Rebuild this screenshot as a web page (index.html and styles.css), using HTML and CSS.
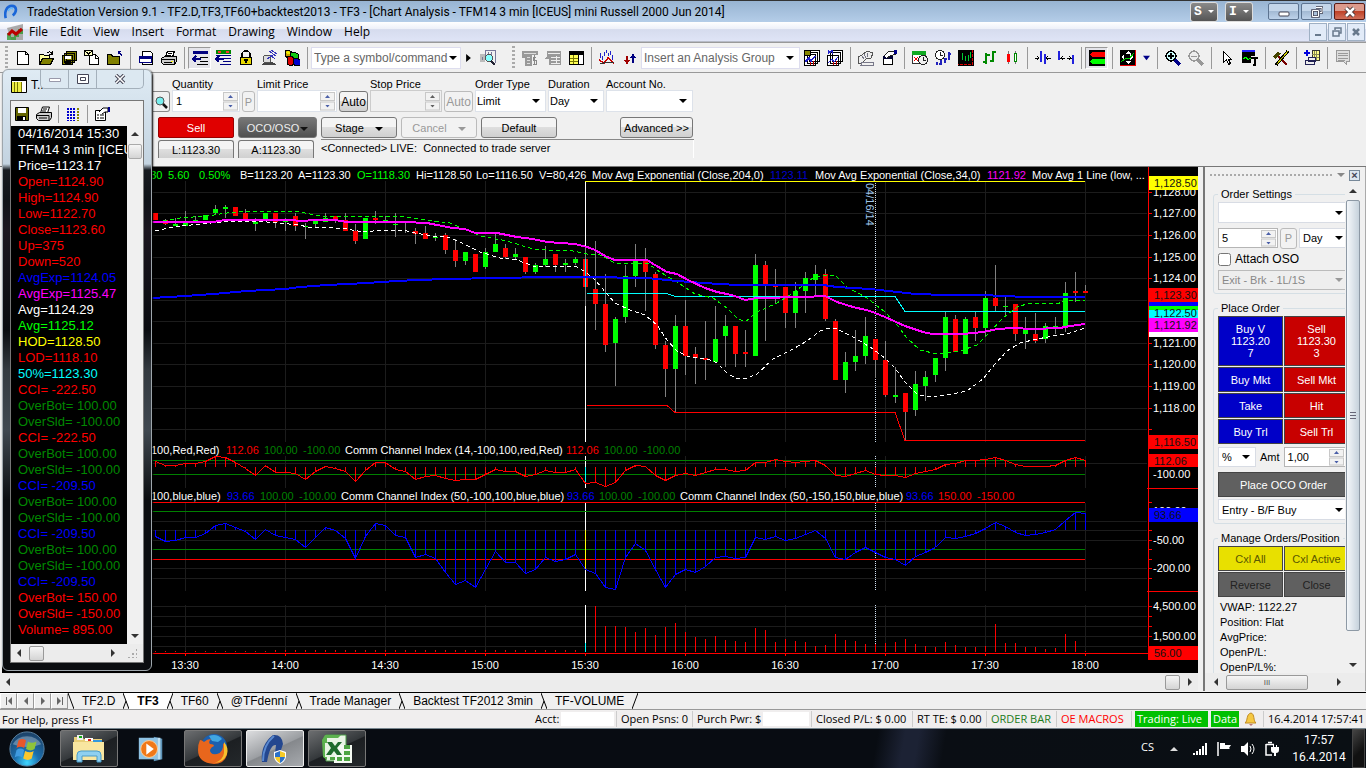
FILE: index.html
```html
<!DOCTYPE html>
<html lang="en">
  <head>
    <meta charset="UTF-8" />
    <meta name="viewport" content="width=device-width, initial-scale=1.0" />
    <title>TradeStation - Chart Analysis</title>
    <link rel="stylesheet" href="styles.css">
  </head>
  <body>
    <header class="titlebar">
      <svg class="app-logo" viewBox="0 0 16 16"><path d="M2 15C0 8 3 1 9 1s6 7 1 11" fill="none" stroke="#1a66d8" stroke-width="3"/><path d="M5 7c1-4 4-4 5-2" fill="none" stroke="#58b8ff" stroke-width="1.5"/></svg>
      <h1>TradeStation Version 9.1 - TF2.D,TF3,TF60+backtest2013 - TF3 - [Chart Analysis - TFM14 3 min [ICEUS] mini Russell 2000 Jun 2014]</h1>
      <button class="si-btn">S <span class="caret"></span></button>
      <button class="si-btn">I <span class="caret"></span></button>
      <div class="win-btns">
        <button aria-label="Minimize"><svg viewBox="0 0 12 12"><rect x="1" y="6" width="10" height="4" rx="1" fill="#fff" stroke="#445" /></svg></button>
        <button aria-label="Restore"><svg viewBox="0 0 12 12"><path d="M5 1.5h6v5H9M1.5 4.5h6v6h-6z" fill="none" stroke="#445" stroke-width="2.6"/><path d="M5 1.5h6v5H9M1.5 4.5h6v6h-6z" fill="none" stroke="#fff"/></svg></button>
        <button class="close" aria-label="Close"><svg viewBox="0 0 12 12"><path d="M2 2l8 8M10 2l-8 8" stroke="#433" stroke-width="4.5"/><path d="M2 2l8 8M10 2l-8 8" stroke="#fff" stroke-width="2.5"/></svg></button>
      </div>
    </header>

    <nav class="menubar">
      <svg class="icon" viewBox="0 0 16 16"><path d="M0 4L16 0v16H4z" fill="#aaa"/><path d="M0 9h4v4h3V9h4V5h5v5h-4v3h-3v3H0z" fill="#393" opacity=".8"/><path d="M1 11l4-4 4 3 6-5" stroke="#b00" stroke-width="3" fill="none"/></svg>
      <a href="#">File</a><a href="#">Edit</a><a href="#">View</a><a href="#">Insert</a><a href="#">Format</a><a href="#">Drawing</a><a href="#">Window</a><a href="#">Help</a>
      <div class="mdi-btns">
        <button aria-label="Minimize document"><svg viewBox="0 0 10 10"><path d="M2 8h6" stroke="#68798c" stroke-width="2"/></svg></button>
        <button aria-label="Restore document"><svg viewBox="0 0 10 10"><path d="M3 3V1h6v5H7M1 4h6v5H1z" fill="none" stroke="#68798c" stroke-width="1.5"/></svg></button>
        <button aria-label="Close document"><svg viewBox="0 0 10 10"><path d="M2 2l6 6M8 2l-6 6" stroke="#68798c" stroke-width="2.5"/></svg></button>
      </div>
    </nav>

    <div class="toolbar">
      <span class="grip"></span>
      <button aria-label="New"><svg class="icon" viewBox="0 0 16 16"><path d="M2.5 1.5h8l3 3v10h-11zM10.500 1.5v3h3" fill="#fff" stroke="#000"/></svg></button>
      <button aria-label="Open"><svg class="icon" viewBox="0 0 16 16"><path d="M1.5 14.5v-10h4l1 1h5v3" fill="#ffff9c" stroke="#000"/><path d="M1.5 14.5l3-6h11l-3 6z" fill="#808000" stroke="#000"/><path d="M9 3c2-2 4-1 5 1M14 1v3h-3" fill="none" stroke="#000"/></svg></button>
      <button aria-label="Save all"><svg class="icon" viewBox="0 0 16 16"><path d="M5.5 1.5h10v9h-10zM3.5 3.5h10v9h-10zM1.5 5.5h10v9h-10z" fill="#808000" stroke="#000"/><path d="M4 6h6v3H4z" fill="#fff"/><path d="M4 11h6v4H4z"/></svg></button>
      <button aria-label="Mail"><svg class="icon" viewBox="0 0 16 16"><path d="M5.5 4.5h6l3 3v7h-9z" fill="#fff" stroke="#000"/><path d="M.5.5h8v5h-8z" fill="#ffffc0" stroke="#000"/><path d="M1 1l3.5 3L8 1M11 5v3h3" fill="none" stroke="#000"/></svg></button>
      <button aria-label="Close folder"><svg class="icon" viewBox="0 0 16 16"><path d="M.5 14.5v-10h4l1 2h7v8z" fill="#808000" stroke="#000"/><path d="M15 6l-3-4M11 4V1h3" fill="none" stroke="#000080"/></svg></button>
      <span class="sep"></span>
      <button aria-label="Window"><svg class="icon" viewBox="0 0 16 16"><path d="M4.5 1.5h8l2 2v11h-10z" fill="#fff" stroke="#000"/><path d="M1.5 6.5h12v6h-12z" fill="#fff" stroke="#000080"/><path d="M1 6h13v3H1z" fill="#000080"/></svg></button>
      <button aria-label="Print"><svg class="icon" viewBox="0 0 16 16"><path d="M4.5 7l2-6h7l-2 6" fill="#fff" stroke="#000"/><path d="M.5 8.5l3-2h12v5l-2 3h-11l-2-2z" fill="#ccc" stroke="#000"/><path d="M1 9.5h12v5M7 3h4M6 5h4M3 12h8" fill="none" stroke="#000"/><path d="M10 11h2v1h-2z" fill="#ff0"/></svg></button>
      <span class="sep"></span>
      <button class="pressed" aria-label="Order bar"><svg class="icon" viewBox="0 0 16 16"><path d="M1 1h15v3H1z" fill="#000080"/><path d="M8 7h8M8 11h8M5 14h11" stroke="#000"/><path d="M9 9H1l3-3M1 9l3 3" fill="none" stroke="#000080" stroke-width="1.5"/></svg></button>
      <button aria-label="Tracking"><svg class="icon" viewBox="0 0 16 16"><path d="M1 0h15v4H1z" fill="#080"/><path d="M3 1h3v2H3zM11 1h3v2h-3z" fill="#f33"/><path d="M1 5h15M8 8h8M8 11h8M5 14h11" stroke="#000080"/><path d="M9 9H1l3-3M1 9l3 3" fill="none" stroke="#000080" stroke-width="1.5"/></svg></button>
      <button aria-label="Lock"><svg class="icon" viewBox="0 0 16 16"><path d="M4 8V4a4 3 0 0 1 8 0v4" fill="none" stroke="#000" stroke-width="1.5"/><path d="M2.5 7.5h11v7h-11z" fill="#e8d800" stroke="#000"/><path d="M8 9v4M6 10h4" stroke="#000" stroke-width="1.5"/></svg></button>
      <button aria-label="Data link"><svg class="icon" viewBox="0 0 16 16"><path d="M1 15l4-5 8 3 2 2z" fill="#444"/><circle cx="6" cy="9" r="4" fill="#ddd" stroke="#555"/><path d="M6 9l6-4M8 1l7 5M10 0l6 4M9 5l5 4" stroke="#33b" fill="none"/></svg></button>
      <button aria-label="Blocks"><svg class="icon" viewBox="0 0 16 16"><path d="M1 1l3-1 4 2v5l-4 1-3-2z" fill="#c8a000" stroke="#000"/><path d="M6 3l4-1 4 2v5l-4 1-4-2z" fill="#1c1" stroke="#000"/><path d="M3 7l4-1 3 2v6l-3 2-4-2z" fill="#d00" stroke="#000"/><path d="M9 9l4-1 3 2v5l-4 1-3-2z" fill="#00c" stroke="#000"/><path d="M1 2l3-1 3 2-3 1z" fill="#ee0"/></svg></button>
      <span class="sep"></span>
      <select class="combo symbol" aria-label="Symbol"><option>Type a symbol/command</option></select>
      <button class="narrow" aria-label="Go"><svg viewBox="0 0 6 10"><path d="M0 0v10l6-5z"/></svg></button>
      <button class="find" aria-label="Find symbol"><svg class="icon" viewBox="0 0 16 16"><path d="M0 4h5v8H0z" fill="#bbb"/><path d="M5 .5h10v12M2 7v3M5 1v6M8 2v3M11 2v3" fill="none" stroke="#779"/><circle cx="9" cy="8" r="3.5" fill="#8ff" stroke="#555"/><path d="M11 11l4 4" stroke="#223" stroke-width="2"/></svg></button>
      <span class="grip second"></span>
      <button aria-label="Quotes"><svg class="icon" viewBox="0 0 16 16"><path d="M0 1h16v4h-6v11H3V8H0z" fill="#999"/><path d="M2 3h12M5 7h3M5 10h3M5 13h3" stroke="#ddd"/><path d="M14 7h-3v3h3v4h-3M12.5 5v10" stroke="#888" fill="none"/></svg></button>
      <button aria-label="Matrix"><svg class="icon" viewBox="0 0 16 16"><path d="M2 1h14v14H4V9H0l2-3z" fill="#999"/><path d="M3 3h12M6 7h9M6 10h9M6 13h9M11 6v8" stroke="#eee"/></svg></button>
      <button aria-label="Table"><svg class="icon" viewBox="0 0 16 16"><path d="M1.5 1.5h14v13h-14z" fill="#fff" stroke="#000"/><path d="M1 1h15v4H1z"/><path d="M1.5 4.5h9v10h-9z" fill="#ff5" stroke="#000"/><path d="M5 5v9M2 8h8M2 11h8" stroke="#770"/></svg></button>
      <span class="sep"></span>
      <button aria-label="Strategy"><svg class="icon" viewBox="0 0 16 16"><path d="M1 3v5M3 6v4M5 2v4M7 0v3M9 3v3M11 1v4M13 5v5" stroke="#22c"/><path d="M0 10l5 3 4-5 6 5" stroke="#c00" fill="none" stroke-width="1.5"/><path d="M1 14l7-2 7 1" stroke="#333" fill="none"/></svg></button>
      <button aria-label="Buy and sell arrows"><svg class="icon" viewBox="0 0 16 16"><path d="M5 6v7M3 10l2 3 2-3" stroke="#a00000" stroke-width="1.5" fill="none"/><path d="M11 13V5M9 8l2-3 2 3" stroke="#000080" stroke-width="1.5" fill="none"/></svg></button>
      <select class="combo analysis" aria-label="Analysis group"><option>Insert an Analysis Group</option></select>
      <button aria-label="Save group"><svg class="icon" viewBox="0 0 16 16"><path d="M5.5.5h10v11h-10zM3.5 2.5h10v11h-10zM.5 4.5h11v11H.5z" fill="#fff" stroke="#000"/><path d="M.5.5h6v5h-6z" fill="#880" stroke="#000"/><path d="M1 12l4-4 2 3 4-5" stroke="#22c" fill="none" stroke-width="1.5"/><path d="M6 15v-3M9 11v4" stroke="#c00"/></svg></button>
      <button aria-label="Manage groups"><svg class="icon" viewBox="0 0 16 16"><path d="M5.5.5h10v11h-10zM3.5 2.5h10v11h-10zM.5 5.5h11v10H.5z" fill="#fff" stroke="#000"/><path d="M1 4V0l2 3 2-3v4M1 13l4-4 2 3 4-5" stroke="#22c" fill="none"/><path d="M6 15v-3M9 11v4" stroke="#c00"/></svg></button>
      <span class="sep"></span>
      <button aria-label="Format analysis"><svg class="icon" viewBox="0 0 16 16"><path d="M0 7l4-2 5-4 6 2-2 5-5 1-4 4H0z" fill="#eee" stroke="#555"/><path d="M4 6l2 3M6 4l2 4M9 3l1 4M4 12h11v3H3z" fill="none" stroke="#778"/></svg></button>
      <button aria-label="Format window"><svg class="icon" viewBox="0 0 16 16"><path d="M2.5 6.5h9v8h-9z" fill="#fff" stroke="#000"/><path d="M2 6h10v3H2z" fill="#003"/><path d="M3 6l4-4 7-1 1 3-6 2-3 2" fill="#fff" stroke="#222"/><path d="M13 0h3v4h-3z" fill="#008"/></svg></button>
      <span class="sep"></span>
      <button aria-label="Calendar"><svg class="icon" viewBox="0 0 16 16"><path d="M.5 2.5h13v11H.5z" fill="#fff" stroke="#333"/><path d="M0 1h14v4H0z" fill="#1a2"/><path d="M2 7l4 4M6 7l-4 4" stroke="#e00"/><circle cx="11" cy="10" r="4.5" fill="#eee" stroke="#222"/><path d="M11 7v3h3" stroke="#222" fill="none"/></svg></button>
      <button aria-label="Interval"><svg class="icon" viewBox="0 0 16 16"><circle cx="5" cy="5" r="4.5" fill="#fff" stroke="#222"/><path d="M5 2v3l3 1" stroke="#222" fill="none"/><path d="M2 12v3M6 10v5M10 8v5M14 2v8M4 14h2M10 9h2M14 4h2" stroke="#22b" stroke-width="1.5"/></svg></button>
      <button aria-label="Chart style"><svg class="icon" viewBox="0 0 16 16"><path d="M0 0h16v16H0z"/><path d="M4 3v7M7 6v5M10 5v6M12 2v6" stroke="#0c3"/><path d="M14.5 0v14.5H0" fill="none" stroke="#d00" stroke-dasharray="3 1"/></svg></button>
      <button aria-label="OHLC"><svg class="icon" viewBox="0 0 16 16"><path d="M5 3v11M2 12h3M5 5h4M12 1v11M9 11h3M12 2h3" stroke="#080" stroke-width="2"/></svg></button>
      <button aria-label="Candles"><svg class="icon" viewBox="0 0 16 16"><path d="M4.5 1v13M11.500 1v13" stroke="#777"/><path d="M3 4h3v8H3z" fill="#f00"/><path d="M10.5 3.5h2v8h-2z" fill="#fff" stroke="#080"/></svg></button>
      <span class="sep"></span>
      <button aria-label="Narrow bars"><svg class="icon" viewBox="0 0 16 16"><path d="M5.5 1v11M9.500 4v10" stroke="#22d" stroke-width="2"/><path d="M0 8h4M2 6l2 2-2 2M16 8h-5M13 6l-2 2 2 2" stroke="#000" fill="none"/></svg></button>
      <button aria-label="Widen bars"><svg class="icon" viewBox="0 0 16 16"><path d="M1 1v9M15 5v9" stroke="#22d" stroke-width="2"/><path d="M2 8h5M5 6L3 8l2 2M9 8h5M11 6l2 2-2 2" stroke="#000" fill="none"/></svg></button>
      <span class="sep"></span>
      <button class="pressed" aria-label="Chart trading"><svg class="icon" viewBox="0 0 16 16"><path d="M0 0h16v16H0z"/><path d="M1 5l2-3h13v5H3z" fill="#f00"/><path d="M1 12l2-3h13v5H3z" fill="#0f0"/></svg></button>
      <span class="sep"></span>
      <button aria-label="Crosshair"><svg class="icon" viewBox="0 0 16 16"><path d="M0 0h16v16H0z"/><path d="M8 1l3 3H5zM8 14l3-3H5zM1 7l3-3v6zM13 7l-3-3v6z" fill="#fff"/><path d="M1 12l5-4 3 1 5-6" stroke="#0c0" fill="none"/><path d="M15 0v15H0" stroke="#e00" fill="none"/></svg></button>
      <button class="narrow" aria-label="More pointers"><svg viewBox="0 0 8 5"><path d="M0 0h8L4 5z" fill="#008"/></svg></button>
      <span class="sep"></span>
      <button aria-label="Zoom in"><svg class="icon" viewBox="0 0 16 16"><circle cx="6" cy="6" r="5" fill="#cff" stroke="#000" stroke-width="1.5"/><path d="M3 6h6M6 3v6" stroke="#000" stroke-width="1.5"/><path d="M10 10l5 5" stroke="#008" stroke-width="3"/></svg></button>
      <button aria-label="Zoom out"><svg class="icon" viewBox="0 0 16 16"><circle cx="6" cy="6" r="5" fill="#eee" stroke="#999" stroke-width="1.5"/><path d="M3 6h6" stroke="#999"/><path d="M10 10l5 5" stroke="#999" stroke-width="3"/></svg></button>
      <span class="sep"></span>
      <button aria-label="Pointer"><svg class="icon" viewBox="0 0 16 16"><path d="M4.5 1.5v11l3-3 2 5 2-1-2-4h3z" fill="#fff" stroke="#000"/></svg></button>
      <button aria-label="Text tool"><svg class="icon" viewBox="0 0 16 16"><path d="M0 0h13v13H0z"/><path d="M0 0h13v2H0z" fill="#22f"/><path d="M1 9l3-2 2 3 2-2h3" stroke="#0f0" fill="none"/><path d="M9 6h7v9H9z" fill="#f0f0f0"/><path d="M9 8h7M12.5 8v7M11 15h3" stroke="#000" stroke-width="2"/></svg></button>
      <span class="sep"></span>
      <button aria-label="Tools"><svg class="icon" viewBox="0 0 16 16"><path d="M4 5l10 10" stroke="#700" stroke-width="2"/><path d="M15 1L3 15" stroke="#000" stroke-width="3"/><path d="M15 1L4 14" stroke="#cc0"/><path d="M0 7l4-5 4 1-5 6z" fill="#440"/></svg></button>
      <span class="sep"></span>
      <button aria-label="Add order"><svg class="icon" viewBox="0 0 16 16"><path d="M8 .5h7v10H8z" fill="#ff8" stroke="#333"/><path d="M10 1v9M12.5 1v9M8 4h7M8 7h7" stroke="#885"/><path d="M0 3h6M3 0v6" stroke="#00d" stroke-width="2"/><path d="M4.5 7.5h7v4h-7zM1.5 10.5h9v4h-9z" fill="#eee" stroke="#225"/></svg></button>
      <span class="sep"></span>
      <button aria-label="Notes"><svg class="icon" viewBox="0 0 16 16"><path d="M1.5.5h13v11h-3v3l-3-3h-7z" fill="#ddd" stroke="#999"/><path d="M3 3h10M3 5.5h10M3 8h10M3 10h7" stroke="#999"/></svg></button>
    </div>

    <form class="orderbar">
      <div class="order-fields">
        <button type="button" class="lookup" aria-label="Look up symbol"><svg class="icon" viewBox="0 0 16 16"><circle cx="7" cy="7" r="4" fill="#7ee" stroke="#555"/><path d="M10 10l4 4" stroke="#111" stroke-width="2.5"/></svg></button>
        <div class="field qty"><label for="qty">Quantity</label><div class="spin"><input id="qty" value="1" /><span class="steps"><button type="button" aria-label="Up"></button><button type="button" aria-label="Down"></button></span></div></div>
        <button type="button" class="btn small" disabled>P</button>
        <div class="field limit"><label for="limit">Limit Price</label><div class="spin"><input id="limit" /><span class="steps"><button type="button" aria-label="Up"></button><button type="button" aria-label="Down"></button></span></div></div>
        <button type="button" class="btn auto">Auto</button>
        <div class="field stop"><label for="stop">Stop Price</label><div class="spin off"><input id="stop" disabled /><span class="steps"><button type="button" aria-label="Up" disabled></button><button type="button" aria-label="Down" disabled></button></span></div></div>
        <button type="button" class="btn auto" disabled>Auto</button>
        <div class="field type"><label for="type">Order Type</label><select id="type"><option>Limit</option></select></div>
        <div class="field dur"><label for="dur">Duration</label><select id="dur"><option>Day</option></select></div>
        <div class="field acct"><label for="acct">Account No.</label><select id="acct"><option></option></select></div>
      </div>
      <div class="order-actions">
        <div class="quote"><button type="button" class="btn sell">Sell</button><button type="button" class="btn price">L:1123.30</button></div>
        <div class="quote"><button type="button" class="btn oco">OCO/OSO<span class="caret"></span></button><button type="button" class="btn price">A:1123.30</button></div>
        <div class="rest">
          <div class="rest-btns">
            <button type="button" class="btn wide">Stage <span class="caret gap"></span></button>
            <button type="button" class="btn wide" disabled>Cancel <span class="caret gap"></span></button>
            <button type="button" class="btn wide">Default</button>
            <button type="button" class="btn adv">Advanced &gt;&gt;</button>
          </div>
          <p class="conn">&lt;Connected&gt; LIVE:&nbsp; Connected to trade server</p>
        </div>
      </div>
    </form>

    <main class="workspace">
      <section class="chart-pane">
        <svg id="chart" viewBox="0 167 1198 506" role="img" aria-label="TFM14 3 min chart"></svg>
        <div class="hscroll"><i class="arr left"></i><span class="track"></span><span class="thumb"></span><i class="arr right"></i></div>
      </section>

      <aside class="side">
        <div class="side-top"><span class="dots"></span><i class="arr down grey"></i><button class="side-close" aria-label="Close panel">×</button></div>
        <div class="side-body">
          <div class="side-view">
            <div class="side-inner">
              <fieldset class="group">
                <legend>Order Settings</legend>
                <select aria-label="Account"><option></option></select>
                <div class="row">
                  <div class="spin s-qty"><input aria-label="Size" value="5" /><span class="steps"><button aria-label="Up"></button><button aria-label="Down"></button></span></div>
                  <button class="btn s-p" disabled>P</button>
                  <select class="s-day" aria-label="Duration"><option>Day</option></select>
                </div>
                <label class="check"><input type="checkbox" /> Attach OSO</label>
                <select class="s-exit" aria-label="Exit" disabled><option>Exit - Brk - 1L/1S</option></select>
              </fieldset>
              <fieldset class="group">
                <legend>Place Order</legend>
                <div class="pads">
                  <button class="buy tall">Buy V<br>1123.20<br>7</button><button class="ask tall">Sell<br>1123.30<br>3</button>
                  <button class="buy">Buy Mkt</button><button class="ask">Sell Mkt</button>
                  <button class="buy">Take</button><button class="ask">Hit</button>
                  <button class="buy">Buy Trl</button><button class="ask">Sell Trl</button>
                </div>
                <div class="row amt">
                  <select class="s-pct" aria-label="Unit"><option>%</option></select>
                  <label for="amt">Amt</label>
                  <div class="spin s-amt"><input id="amt" value="1,00" /><span class="steps"><button aria-label="Up"></button><button aria-label="Down"></button></span></div>
                </div>
                <button class="grey-pad">Place OCO Order</button>
                <select aria-label="Entry"><option>Entry - B/F Buy</option></select>
              </fieldset>
              <fieldset class="group">
                <legend>Manage Orders/Position</legend>
                <div class="pads">
                  <button class="cxl">Cxl All</button><button class="cxl">Cxl Active</button>
                  <button class="dim">Reverse</button><button class="dim">Close</button>
                </div>
                <ul class="stats">
                  <li>VWAP: 1122.27</li><li>Position: Flat</li><li>AvgPrice:</li><li>OpenP/L:</li><li>OpenP/L%:</li>
                </ul>
              </fieldset>
            </div>
          </div>
          <div class="vscroll"><i class="arr up"></i><span class="vthumb"></span><i class="arr down"></i></div>
        </div>
        <div class="hscroll"><i class="arr left"></i><span class="thumb long">III</span><span class="track"></span><i class="arr right"></i></div>
      </aside>
    </main>

    <nav class="tabs">
      <button class="nav" aria-label="First"><svg viewBox="0 0 8 8"><path d="M1 0h1v8H1zM7 0v8L3 4z"/></svg></button>
      <button class="nav" aria-label="Previous"><svg viewBox="0 0 8 8"><path d="M6 0v8L2 4z"/></svg></button>
      <button class="nav" aria-label="Next"><svg viewBox="0 0 8 8"><path d="M2 0v8l4-4z"/></svg></button>
      <button class="nav" aria-label="Last"><svg viewBox="0 0 8 8"><path d="M6 0h1v8H6zM1 0v8l4-4z"/></svg></button>
      <svg class="slash" viewBox="0 0 6 17"><path d="M0 0l6 16"/></svg>
      <a href="#">TF2.D</a>
      <svg class="slash" viewBox="0 0 6 17"><path class="white" d="M0 0h6v17z"/><path d="M0 0l6 16M0 16l3-8"/></svg>
      <a href="#" class="active">TF3</a>
      <svg class="slash" viewBox="0 0 6 17"><path class="white" d="M0 0h6l-6 17z"/><path d="M6 0L0 16M6 16L3 8"/></svg>
      <a href="#">TF60</a>
      <svg class="slash" viewBox="0 0 6 17"><path d="M0 0l6 16M0 16l3-8"/></svg>
      <a href="#">@TFdenní</a>
      <svg class="slash" viewBox="0 0 6 17"><path d="M0 0l6 16M0 16l3-8"/></svg>
      <a href="#">Trade Manager</a>
      <svg class="slash" viewBox="0 0 6 17"><path d="M0 0l6 16M0 16l3-8"/></svg>
      <a href="#">Backtest TF2012 3min</a>
      <svg class="slash" viewBox="0 0 6 17"><path d="M0 0l6 16M0 16l3-8"/></svg>
      <a href="#">TF-VOLUME</a>
      <svg class="slash" viewBox="0 0 6 17"><path d="M6 0L0 16"/></svg>
    </nav>

    <footer class="status">
      <span class="help">For Help, press F1</span>
      <span class="cell c-acct">Acct: <i class="blank"></i></span>
      <span class="cell c-psn">Open Psns: 0</span>
      <span class="cell c-pwr">Purch Pwr: $<i class="blank"></i></span>
      <span class="cell c-pl">Closed P/L: $ 0.00</span>
      <span class="cell c-rt">RT TE: $ 0.00</span>
      <span class="cell c-ob">ORDER BAR</span>
      <span class="cell c-oe">OE MACROS</span>
      <span class="live c-live">Trading: Live</span>
      <span class="live c-data">Data</span>
      <svg class="bell" viewBox="0 0 14 14"><path d="M1 11c3-2 1-9 6-10 4 1 2 8 5 10z" fill="#f5c842" stroke="#c08a20"/><path d="M5 12h4l-2 2z" fill="#b77"/></svg>
      <span class="cell c-date">16.4.2014 17:57:41</span>
    </footer>

    <div class="taskbar">
      <button class="start" aria-label="Start"><svg viewBox="0 0 40 40">
        <defs><radialGradient id="orb" cx="50%" cy="90%" r="90%"><stop offset="0" stop-color="#3fd6ff"/><stop offset=".4" stop-color="#1b6fae"/><stop offset="1" stop-color="#1c3f63"/></radialGradient></defs>
        <circle cx="20" cy="20" r="18" fill="url(#orb)" stroke="#5c86a8"/>
        <path d="M5 15a16 13 0 0 1 30 0q-15 6-30 0z" fill="#fff" opacity=".3"/>
        <path d="M11 11q4-3 8 0l-2 8q-4-3-8 0z" fill="#e8572a"/><path d="M21 12q4 3 9 0l-2 8q-4 3-9 0z" fill="#8fc43a"/><path d="M9 21q4-3 8 0l-2 8q-4-3-8 0z" fill="#3f9be0"/><path d="M18 22q5 3 9 0l-2 8q-4 3-9 0z" fill="#fbc72c"/></svg></button>
      <button class="task" aria-label="Explorer"><svg viewBox="0 0 34 32"><path d="M2 4h8l2 2h18v20H2z" fill="#e9cf78"/><path d="M5 2h6v5H5z" fill="#eee"/><path d="M7 3h3v2H7z" fill="#1a1"/><path d="M13 5h8v3h-8z" fill="#fff"/><path d="M16 6h3v2h-3z" fill="#d22"/><path d="M21 7h9v3h-9z" fill="#39d"/><path d="M1 9h31v18H1z" fill="#f8e6a0"/><path d="M5 29V22q0-4 4-4h16q4 0 4 4v7h-4v-6H10v6z" fill="#8fd0f0" stroke="#4a9cc8"/></svg></button>
      <button class="task plain" aria-label="Media Player"><svg viewBox="0 0 34 32"><path d="M20 3l9 2v22l-9 2z" fill="#5d93b8"/><path d="M4 4h20v23H4z" fill="#8fc3e4"/><path d="M24 4h3v23h-3z" fill="#bfe0f2"/><circle cx="15" cy="16" r="9" fill="#f07818" stroke="#fbd2a0"/><path d="M12 10v12l8-6z" fill="#fff"/></svg></button>
      <button class="task" aria-label="Firefox"><svg viewBox="0 0 34 32"><circle cx="18" cy="14" r="13" fill="#1c5fae"/><path d="M13 3q8-3 13 3l-4 3-6-1z" fill="#41a6e0"/><path d="M4 7q2 0 4 2 3-3 7-3-3 3-1 5 4 0 4 2-3 1-4 4 0 5 7 4 7-2 6-11 5 6 4 12-3 9-13 9Q2 30 2 17q0-6 2-10z" fill="#e8661c"/><path d="M28 9q5 6 3 12-3 8-12 9 8-3 9-10z" fill="#f8c22e"/></svg></button>
      <button class="task current" aria-label="TradeStation"><svg viewBox="0 0 34 32"><path d="M4 29Q2 12 15 2q9-1 10 9l-3 9h-5l1-8q-6-1-9 17z" fill="#24478f"/><path d="M5 28Q5 12 16 3" fill="none" stroke="#5b8ad0" stroke-width="2"/><path d="M16 19l6-2 6 2v5q-1 5-6 7-5-2-6-7z" fill="#fff"/><path d="M17 20l5-2v6h-5zM22 24h5q-1 4-5 6z" fill="#2c72c8"/><path d="M22 18l5 2v4h-5zM17 24h5v6q-4-2-5-6z" fill="#f5ca28"/></svg></button>
      <button class="task" aria-label="Excel"><svg viewBox="0 0 34 32"><path d="M6 2h20v26H6z" fill="#e8f4e4" stroke="#4b9a48"/><path d="M2 7l3-5h16l-3 3H7v22l-4-3z" fill="#5db24f"/><path d="M5 10h17v14H5z" fill="#e8f4e4"/><path d="M19 12h13v18H14v-6" fill="#f4faf2"/><path d="M24 12h6v4h-6zM24 18h6v4h-6zM24 24h6v4h-6zM17 24h5v4h-5zM10 24h5v3h-5z" fill="#4ea543"/><path d="M7 9h5l3 4 3-4h4l-5 6 5 7h-5l-3-4-3 4H6l5-7z" fill="#1e6b2c"/></svg></button>
      <div class="tray">
        <span class="lang">CS</span>
        <i class="arr up"></i>
        <svg viewBox="0 0 16 16"><path d="M1 12h2v2H1zM4 10h2v4H4zM7 8h2v6H7zM10 5h2v9h-2zM13 2h2v12h-2z" fill="#fff"/></svg>
        <svg viewBox="0 0 16 16"><path d="M2 1v14" stroke="#fff" stroke-width="1.5"/><path d="M4 2h5v2h6l-2 3 1 1H9V8H4z" fill="#fff"/></svg>
        <svg viewBox="0 0 16 16"><path d="M1 5h3l4-4v14l-4-4H1z" fill="#fff"/><path d="M10 5q2 3 0 6M12 3q4 5 0 10" fill="none" stroke="#fff"/></svg>
        <svg viewBox="0 0 16 16"><path d="M2 3.500h8M2 3v11h6M4 1.500h4" fill="none" stroke="#fff" stroke-width="1.5"/><path d="M7 6h8v3q0 3-3 3h-2q-3 0-3-3zM10 12h2v3h-2zM9 4h1v2H9zM12 4h1v2h-1z" fill="#fff"/></svg>
        <time class="clock">17:57<br>16.4.2014</time>
        <button class="peek" aria-label="Show desktop"></button>
      </div>
    </div>

    <section class="data-window">
      <div class="dw-title">
        <svg class="icon" viewBox="0 0 16 16"><path d="M.5.5h15v15H.5z" fill="#fff" stroke="#000"/><path d="M0 0h16v4H0z"/><path d="M1 5h9v10H1z" fill="#ee4"/><path d="M3.5 5v10M6.5 5v10M10.5 5v10" stroke="#770"/></svg>
        <span>T...</span>
        <div class="dw-btns">
          <button aria-label="Minimize"><svg viewBox="0 0 12 10"><path d="M.5 4.5h11v3H.5z" fill="#fff" stroke="#99a"/></svg></button>
          <button aria-label="Maximize"><svg viewBox="0 0 12 10"><path d="M.5.5h11v9H.5zM3.5 3.5h5v3h-5z" fill="#fff" stroke="#445"/></svg></button>
          <button aria-label="Close"><svg viewBox="0 0 12 10"><path d="M2 1l8 8M10 1L2 9" stroke="#445" stroke-width="3.5"/><path d="M2 1l8 8M10 1L2 9" stroke="#fff" stroke-width="1.5"/></svg></button>
        </div>
      </div>
      <div class="dw-inner">
        <div class="dw-tools">
          <button aria-label="Save"><svg class="icon" viewBox="0 0 16 16"><path d="M1.5 1.5h13v13h-13z" fill="#660" stroke="#000"/><path d="M4 2h8v5H4z" fill="#fff"/><path d="M3 10h9v5H3z"/><path d="M9 11h2v3H9z" fill="#fff"/></svg></button>
          <button aria-label="Print"><svg class="icon" viewBox="0 0 16 16"><path d="M4.5 7l2-6h7l-2 6" fill="#fff" stroke="#000"/><path d="M.5 8.5l3-2h12v5l-2 3h-11l-2-2z" fill="#ccc" stroke="#000"/><path d="M1 9.5h12v5M7 3h4M6 5h4M3 12h8" fill="none" stroke="#000"/></svg></button>
          <span class="sep"></span>
          <button aria-label="Grid"><svg class="icon" viewBox="0 0 16 16"><path d="M3 2v13M6 2v13M9 2v13" stroke="#00c" stroke-width="2" stroke-dasharray="2 1"/><path d="M13 2v13" stroke="#880" stroke-width="2" stroke-dasharray="2 1"/></svg></button>
          <span class="sep"></span>
          <button aria-label="Properties"><svg class="icon" viewBox="0 0 16 16"><path d="M1.5 4.5h10v10h-10z" fill="#fff" stroke="#000"/><path d="M3 9h2M3 12h2M6 9h4M6 12h4" stroke="#000"/><path d="M5 6l4-4h5v4h-3l-3 2" fill="#fff" stroke="#000"/><path d="M14 1h2v5h-2z" fill="#008"/></svg></button>
        </div>
        <div class="dw-main">
          <ul class="dw-list">
            <li>04/16/2014 15:30</li><li>TFM14 3 min [ICEUS]</li><li>Price=1123.17</li>
            <li class="red">Open=1124.90</li><li class="red">High=1124.90</li><li class="red">Low=1122.70</li><li class="red">Close=1123.60</li><li class="red">Up=375</li><li class="red">Down=520</li>
            <li class="blue">AvgExp=1124.05</li><li class="magenta">AvgExp=1125.47</li><li>Avg=1124.29</li><li class="lime">Avg=1125.12</li><li class="yellow">HOD=1128.50</li><li class="red">LOD=1118.10</li><li class="cyan">50%=1123.30</li>
            <li class="red">CCI= -222.50</li><li class="green">OverBot= 100.00</li><li class="green">OverSld= -100.00</li>
            <li class="red">CCI= -222.50</li><li class="green">OverBot= 100.00</li><li class="green">OverSld= -100.00</li>
            <li class="blue">CCI= -209.50</li><li class="green">OverBot= 100.00</li><li class="green">OverSld= -100.00</li>
            <li class="blue">CCI= -209.50</li><li class="green">OverBot= 100.00</li><li class="green">OverSld= -100.00</li>
            <li class="blue">CCI= -209.50</li><li class="red">OverBot= 150.00</li><li class="red">OverSld= -150.00</li><li class="red">Volume= 895.00</li>
          </ul>
          <div class="vscroll"><i class="arr up"></i><span class="vthumb short"></span><i class="arr down"></i></div>
        </div>
        <div class="hscroll"><i class="arr left"></i><span class="thumb"></span><span class="track"></span><i class="arr right"></i><span class="size-grip"></span></div>
      </div>
    </section>

    <script src="chart.js"></script>
  </body>
</html>
```
FILE: styles.css
```css
* {
  box-sizing: border-box;
}

body {
  display: flex;
  flex-direction: column;
  position: relative;
  min-height: 100vh;
  margin: 0;
  overflow: hidden;
  background-color: #f0f0f0;
  color: #000;
  font-family: "Liberation Sans", Arial, sans-serif;
  font-size: 11px;
}

button,
input,
select {
  margin: 0;
  padding: 0;
  border: none;
  border-radius: 0;
  background: none;
  color: inherit;
  font: inherit;
}

a {
  color: inherit;
  text-decoration: none;
}

ul,
p {
  margin: 0;
  padding: 0;
  list-style: none;
}

.icon {
  display: block;
  flex: none;
  width: 16px;
  height: 16px;
}

/* title bar */
.titlebar {
  display: flex;
  align-items: center;
  height: 22px;
  padding: 0 1px 0 4px;
  border-top: 1px solid #333;
  background: linear-gradient(#98b4d2, #b4cde8);
  font-family: Roboto, "Open Sans", sans-serif;
}

.app-logo {
  width: 14px;
  height: 16px;
}

.titlebar h1 {
  flex: 1;
  margin: 0 0 0 9px;
  font-size: 12px;
  font-weight: normal;
  line-height: 20px;
  white-space: nowrap;
}

.si-btn {
  display: flex;
  justify-content: space-around;
  align-items: center;
  width: 28px;
  height: 20px;
  margin-right: 7px;
  border: 1px solid #ddd;
  border-radius: 3px;
  background: linear-gradient(#8a8a8a, #555);
  color: #fff;
  font: bold 13px "Liberation Mono", monospace;
}

.caret {
  display: inline-block;
  border: 4px solid transparent;
  border-top-color: currentColor;
  border-bottom: none;
  vertical-align: middle;
}

.caret.gap {
  margin-left: 8px;
}

.si-btn .caret {
  border-width: 3px 3px 0;
}

.win-btns {
  display: flex;
  gap: 2px;
  margin-left: 8px;
}

.win-btns button {
  width: 31px;
  height: 17px;
  border: 1px solid #5c7390;
  border-radius: 2px;
  background: linear-gradient(#c4d6ea 45%, #a3bad4 50%, #bdd2ea);
}

.win-btns svg {
  display: block;
  width: 12px;
  height: 12px;
  margin: auto;
}

.win-btns .close {
  border-color: #5a1a14;
  background: linear-gradient(#dc9a8c 45%, #bf4228 50%, #d0705a);
}

/* menu */
.menubar {
  display: flex;
  align-items: center;
  height: 20px;
  padding-left: 7px;
  border-bottom: 1px solid #b8bcc8;
  background: linear-gradient(#fff, #eef1f9 35%, #d6dcee 40%, #dfe4f6);
  font-family: "Open Sans", "Noto Sans", sans-serif;
  font-size: 12px;
}

.menubar a {
  padding: 0 6px;
}

.mdi-btns {
  display: flex;
  gap: 1px;
  margin-left: auto;
  padding-right: 1px;
}

.mdi-btns button {
  width: 18px;
  height: 18px;
  border: 1px solid #9fb0c4;
  background-color: #e2ebf8;
}

.mdi-btns svg {
  display: block;
  width: 10px;
  height: 10px;
  margin: auto;
}

/* toolbar */
.toolbar {
  display: flex;
  align-items: center;
  height: 31px;
  padding-left: 5px;
  border-top: 1px solid #999;
  border-bottom: 1px solid #999;
}

.toolbar button {
  display: flex;
  flex: none;
  justify-content: center;
  align-items: center;
  width: 23px;
  height: 22px;
}

.toolbar .icon {
  shape-rendering: crispEdges;
}

.toolbar .pressed {
  border: 1px solid;
  border-color: #999 #fff #fff #999;
  background-color: #e4e4ea;
}

.toolbar .narrow {
  width: 14px;
}

.narrow svg {
  width: 7px;
  height: 8px;
}

.toolbar .find {
  width: 26px;
}

.grip {
  width: 3px;
  height: 24px;
  margin-right: 3px;
  background: repeating-linear-gradient(#aaa 0 2px, transparent 2px 4px);
}

.grip.second {
  margin-left: 11px;
}

.sep {
  flex: none;
  width: 1px;
  height: 22px;
  margin: 0 3px 0 4px;
  background-color: #999;
}

select {
  appearance: none;
  background: #fff url("data:image/svg+xml,%3Csvg xmlns='http://www.w3.org/2000/svg' width='8' height='4'%3E%3Cpath d='M0 0h8L4 4z'/%3E%3C/svg%3E") no-repeat right 5px center;
}

select:disabled {
  background-color: #eee;
  background-image: url("data:image/svg+xml,%3Csvg xmlns='http://www.w3.org/2000/svg' width='8' height='4'%3E%3Cpath d='M0 0h8L4 4z' fill='%23999'/%3E%3C/svg%3E");
  color: #888;
  opacity: 1;
}

.combo {
  flex: none;
  height: 22px;
  padding-left: 2px;
  border: 1px solid #dde;
  color: #666;
  font-size: 12px;
}

.symbol {
  width: 150px;
  background-position: right 3px center;
}

.analysis {
  width: 159px;
}

/* order bar */
.orderbar {
  display: flex;
  flex-direction: column;
  gap: 5px;
  height: 94px;
  padding: 5px 0 0 153px;
  border-bottom: 1px solid #777;
  overflow: hidden;
}

.order-fields {
  display: flex;
  align-items: flex-end;
  gap: 2px;
  height: 34px;
}

.field {
  display: flex;
  flex-direction: column;
  flex: none;
}

.field label {
  height: 12px;
  line-height: 12px;
}

.field select {
  height: 22px;
  padding-left: 1px;
  border: 1px solid #dde2ea;
}

.qty {
  width: 68px;
}

.limit {
  width: 80px;
}

.stop {
  width: 72px;
}

.type {
  width: 71px;
}

.dur {
  width: 56px;
}

.acct {
  width: 87px;
}

.spin {
  display: flex;
  height: 22px;
  padding: 1px;
  border: 1px solid #dde2ea;
  background-color: #fff;
}

.spin.off {
  border-color: #ccc;
  background-color: #f0f0f0;
}

.spin input {
  flex: 1;
  min-width: 0;
  padding-left: 2px;
}

.steps {
  display: flex;
  flex: none;
  flex-direction: column;
  gap: 1px;
  width: 15px;
}

.steps button {
  flex: 1;
  border: 1px solid #c8c8c8;
  background: #f2f2f2 url("data:image/svg+xml,%3Csvg xmlns='http://www.w3.org/2000/svg' width='5' height='3'%3E%3Cpath d='M0 3h5L2.500 0z' fill='%234a5fa8'/%3E%3C/svg%3E") no-repeat center;
}

.steps button + button {
  transform: scaleY(-1);
}

.steps button:disabled {
  filter: grayscale(1);
}

.btn {
  flex: none;
  height: 21px;
  border: 1px solid #777;
  border-radius: 3px;
  background: linear-gradient(#f4f4f4 45%, #dedede 50%, #d0d0d0);
}

.btn:disabled {
  border-color: #bbb;
  background: #f2f2f2;
  color: #999;
}

.lookup {
  width: 17px;
  height: 21px;
  border: 1px solid #888;
  border-left: none;
  border-radius: 0 3px 3px 0;
}

.btn.small {
  width: 13px;
}

.btn.auto {
  width: 29px;
  font-size: 12px;
}

.order-actions {
  display: flex;
  gap: 4px;
  padding-left: 5px;
}

.quote {
  display: flex;
  flex-direction: column;
  gap: 2px;
  width: 76px;
}

.quote:nth-child(2) {
  width: 79px;
}

.btn.sell {
  border-color: #900;
  border-radius: 2px;
  background: #e00000;
  color: #fff;
}

.btn.oco {
  background: linear-gradient(#777, #505050);
  color: #eee;
}

.oco .caret {
  margin-left: 1px;
  border-top-color: #111;
}

.btn.price {
  width: 76px;
  height: 18px;
  border-bottom: none;
  border-radius: 3px 3px 0 0;
}

.rest {
  width: 373px;
}

.rest-btns {
  display: flex;
  gap: 4px;
  padding-bottom: 1px;
  border-bottom: 1px solid #888;
}

.btn.wide {
  width: 76px;
}

.btn.adv {
  width: 73px;
  margin: 0 1px 0 auto;
}

.conn {
  height: 18px;
  border-right: 1px solid #fff;
  line-height: 16px;
}

/* chart and side panel */
.workspace {
  display: grid;
  grid-template-columns: 1fr 163px;
}

.chart-pane {
  padding-right: 5px;
}

#chart {
  display: block;
  width: 100%;
  background-color: #000;
  font-family: "Liberation Sans", Arial, sans-serif;
  font-size: 11px;
}

.hscroll {
  display: flex;
  align-items: center;
  gap: 4px;
  height: 18px;
  padding: 0 6px;
  background-color: #ececec;
}

.hscroll .track {
  flex: 1;
}

.thumb {
  width: 15px;
  height: 15px;
  border: 1px solid #999;
  border-radius: 2px;
  background: linear-gradient(#f6f6f6, #d4d4d4);
}

.chart-pane .thumb {
  margin-right: 4px;
}

.dw-inner .thumb {
  margin-left: 4px;
}

.thumb.long {
  width: 82px;
  margin-left: 4px;
  color: #555;
  font-size: 8px;
  line-height: 13px;
  text-align: center;
}

.arr {
  flex: none;
  border: 4px solid transparent;
}

.arr.left {
  border-right-color: #333;
  border-left: none;
}

.arr.right {
  border-left-color: #333;
  border-right: none;
}

.arr.up {
  border-bottom-color: #333;
  border-top: none;
}

.arr.down {
  border-top-color: #333;
  border-bottom: none;
}

.arr.down.grey {
  border-top-color: #888;
}

.side {
  display: flex;
  flex-direction: column;
  border-left: 2px solid #777;
  border-right: 1px solid #aaa;
}

.side .hscroll {
  padding: 0 24px 0 9px;
}

.side-top {
  display: flex;
  align-items: center;
  gap: 4px;
  height: 16px;
  padding: 0 5px;
}

.dots {
  flex: 1;
  height: 2px;
  background: repeating-linear-gradient(90deg, #aaa 0 2px, transparent 2px 4px);
}

.side-close {
  width: 11px;
  height: 11px;
  border: 1px solid #789;
  background-color: #dde6f0;
  color: #445;
  font-size: 11px;
  font-weight: bold;
  line-height: 9px;
}

.side-body {
  display: flex;
  flex: 1;
}

.side-view {
  flex: 1;
  margin-left: 8px;
  overflow: hidden;
  contain: size;
}

.side-inner {
  width: 142px;
  padding-top: 4px;
}

.group {
  display: flex;
  flex-direction: column;
  min-width: 0;
  margin: 0;
  padding: 1px 5px 3px 4px;
  border: 1px solid #d5dfe5;
  border-radius: 3px;
}

.group + .group {
  margin-top: 7px;
}

.group legend {
  height: 14px;
  padding: 0 3px;
  line-height: 14px;
}

.group select {
  height: 21px;
  padding-left: 3px;
  border: 1px solid #d8dce4;
}

.group select.s-exit {
  height: 20px;
  border-color: #bbb;
}

.row {
  display: flex;
  align-items: center;
  gap: 2px;
  height: 20px;
  margin-top: 5px;
}

.row .spin {
  flex: none;
  height: 20px;
  border-color: #b5b5b5;
}

.s-qty {
  width: 60px;
}

.s-p {
  width: 17px;
}

.group .s-day {
  flex: 1;
  height: 20px;
}

.check {
  display: flex;
  align-items: center;
  gap: 4px;
  height: 22px;
  font-size: 12px;
}

.check input {
  width: 13px;
  height: 13px;
}

.pads {
  display: grid;
  grid-template-columns: 1fr 1fr;
  gap: 1px;
}

.pads button {
  height: 25px;
  border: 1px solid #444;
  color: #fff;
}

.pads .tall {
  height: 50px;
  line-height: 12px;
}

.pads .buy {
  background-color: #0000c8;
}

.pads .ask {
  background-color: #c80000;
}

.row.amt {
  margin: 3px 0 5px;
}

.group .s-pct {
  flex: none;
  width: 38px;
  height: 20px;
}

.amt label {
  padding: 0 2px;
}

.s-amt {
  width: 62px;
}

.grey-pad {
  height: 25px;
  margin-bottom: 2px;
  border: 1px solid #444;
  background-color: #606060;
  color: #fff;
}

.pads .cxl {
  background-color: #e8e000;
  color: #5a5800;
}

.pads .dim {
  background-color: #606060;
  color: #222;
}

.stats {
  padding: 3px 0 0 2px;
  line-height: 15px;
}

.vscroll {
  display: flex;
  flex-direction: column;
  justify-content: space-between;
  align-items: center;
  width: 16px;
  padding: 6px 0;
}

.side .vscroll {
  margin-right: 4px;
}

.vthumb {
  position: relative;
  flex: 1;
  width: 14px;
  margin: 7px 0 32px;
  border: 1px solid #8d99a5;
  border-radius: 2px;
  background: linear-gradient(90deg, #f4f7fa, #c6d2dc);
}

.side .vthumb::after {
  content: "";
  position: absolute;
  top: calc(50% - 4px);
  left: 3px;
  width: 6px;
  height: 8px;
  background: repeating-linear-gradient(#667 0 1px, transparent 1px 3px);
}

/* sheet tabs */
.tabs {
  display: flex;
  height: 18px;
  margin-top: 1px;
  border-top: 1px solid #000;
  border-bottom: 1px solid #999;
  font-size: 12px;
  line-height: 16px;
}

.tabs a {
  padding: 0 8px;
}

.tabs .active {
  background-color: #fff;
  font-weight: bold;
}

.nav {
  width: 17px;
  height: 16px;
  border: 1px solid;
  border-color: #fff #999 #999 #fff;
  background-color: #eee;
}

.nav svg {
  display: block;
  width: 8px;
  height: 8px;
  margin: auto;
  fill: #666;
}

.slash {
  width: 6px;
  height: 17px;
  fill: none;
  stroke: #000;
}

.slash .white {
  fill: #fff;
  stroke: none;
}

/* status bar */
.status {
  display: flex;
  align-items: center;
  height: 18px;
  background-color: #f0eeee;
  font-family: "Open Sans", "Noto Sans", sans-serif;
  font-size: 11px;
  white-space: nowrap;
}

.help {
  flex: 1;
  padding-left: 2px;
}

.cell {
  display: flex;
  height: 16px;
  padding-left: 4px;
  border-right: 1px solid #ccc;
  line-height: 16px;
}

.blank {
  flex: 1;
  height: 14px;
  margin: 1px 2px;
  background-color: #fff;
}

.c-acct {
  width: 86px;
}

.c-psn {
  width: 76px;
}

.c-pwr {
  width: 119px;
}

.c-pl {
  width: 101px;
}

.c-rt {
  width: 74px;
}

.c-ob {
  width: 70px;
  color: #1c7c1c;
}

.c-oe {
  width: 75px;
  color: #f00;
}

.live {
  height: 16px;
  margin-left: 3px;
  padding-left: 2px;
  background-color: #00c000;
  color: #fff;
  line-height: 16px;
}

.c-live {
  width: 73px;
}

.c-data {
  width: 28px;
}

.bell {
  width: 14px;
  height: 14px;
  margin: 0 5px;
}

.c-date {
  width: 103px;
  border-right: none;
  border-left: 1px solid #ccc;
}

/* taskbar */
.taskbar {
  display: flex;
  flex: 1;
  align-items: center;
  min-height: 39px;
  border-top: 1px solid #77858e;
  background: linear-gradient(100deg, #080c12 64%, #1c2234 66%, #1c2234 67%, #0a0e14 69%, #0a0f14);
}

.start {
  width: 38px;
  height: 38px;
  margin: 0 14px 0 8px;
}

.start svg {
  display: block;
}

.task {
  width: 58px;
  height: 37px;
  margin-right: 4px;
  border: 1px solid #777;
  border-radius: 2px;
  background: linear-gradient(155deg, #6c6e70, #34383b 50%, #1c1f22 52%, #24282b);
}

.task svg {
  display: block;
  width: 34px;
  height: 32px;
  margin: auto;
}

.task.plain {
  border-color: transparent;
  background: none;
}

.task.plain svg {
  width: 32px;
  height: 30px;
}

.task.current {
  border-color: #eee;
  background: linear-gradient(155deg, #dcdddf, #9b9ea2 50%, #85888c 52%, #a7aaae);
}

.tray {
  display: flex;
  align-items: center;
  align-self: stretch;
  margin-left: auto;
  color: #fff;
  font-family: "Open Sans", "Noto Sans", sans-serif;
}

.tray svg {
  width: 16px;
  height: 16px;
  margin-left: 8px;
}

.lang {
  padding: 0 16px 4px 0;
}

.tray .arr {
  margin-right: 6px;
  border-bottom-color: #ddd;
}

.clock {
  width: 66px;
  margin-left: 6px;
  font-family: Roboto, "Open Sans", sans-serif;
  font-size: 12px;
  line-height: 17px;
  text-align: center;
}

.peek {
  align-self: stretch;
  width: 13px;
  margin-right: 1px;
  border: 1px solid #444;
  background: linear-gradient(135deg, #444, #111 60%);
}

/* floating data window */
.data-window {
  position: absolute;
  top: 69px;
  left: 2px;
  width: 150px;
  padding: 0 7px 7px;
  border: 1px solid #9ea6ac;
  border-radius: 6px;
  background: linear-gradient(#dfebf4, #c3d3e0 94px, #181b20 100px, #101318 130px, #1c1720 160px, #0a0c10 260px, #343a40 300px, #404850 360px, #0b0d10 430px, #0b0d10);
  box-shadow: 1px 1px 2px #000;
}

.dw-title {
  display: flex;
  align-items: flex-start;
  height: 30px;
}

.dw-title .icon {
  margin: 7px 4px 0 1px;
}

.dw-title span {
  width: 8px;
  margin-top: 8px;
  font-size: 12px;
  white-space: nowrap;
}

.dw-btns {
  display: flex;
  margin-left: auto;
  border: 1px solid #a4b0bb;
  border-top: none;
  border-radius: 0 0 5px 5px;
  background-color: #dce8f1;
}

.dw-btns button {
  width: 28px;
  height: 18px;
  border-right: 1px solid #a4b0bb;
}

.dw-btns button:last-child {
  width: 46px;
  border-right: none;
}

.dw-btns svg {
  display: block;
  width: 12px;
  height: 10px;
  margin: auto;
}

.dw-inner {
  border: 1px solid #777;
  background-color: #f0f0f0;
}

.dw-tools {
  display: flex;
  align-items: center;
  height: 25px;
}

.dw-tools button {
  display: flex;
  justify-content: center;
  width: 22px;
}

.dw-tools .sep {
  height: 18px;
  margin: 0 3px;
}

.dw-main {
  display: flex;
}

.dw-list {
  flex: 1;
  min-width: 0;
  padding: 0 0 6px 7px;
  overflow: hidden;
  background-color: #000;
  color: #fff;
  font-size: 13px;
  line-height: 16px;
  white-space: nowrap;
}

.red {
  color: #f00;
}

.blue {
  color: #00f;
}

.magenta {
  color: #f0f;
}

.lime {
  color: #0f0;
}

.yellow {
  color: #ff0;
}

.cyan {
  color: #0ff;
}

.green {
  color: #080;
}

.vthumb.short {
  flex: none;
  height: 15px;
  margin: 8px 0 auto;
  border-color: #aaa;
  background: linear-gradient(#f6f6f6, #d4d4d4);
}

.size-grip {
  width: 10px;
  height: 10px;
  margin-left: 8px;
  background: radial-gradient(#aaa 1px, transparent 1px) 0 0 / 4px 4px;
  clip-path: polygon(100% 0, 100% 100%, 0 100%);
}
```
FILE: chart.js
```js
// every bar is 10px wide, the first one stands at x = 155
const START = 155;
const STEP = 10;

// high, low, body top, body bottom, 1 = up bar
const bars = [
  [213,220,213,220,0],[219,225,220,224,0],[218,226,224,226,1],[211,226,222,226,1],[216,223,220,221,1],
  [215,220,215,220,1],[205,215,209,213,1],[205,218,207,209,1],[207,216,207,216,0],[209,222,213,220,0],
  [218,231,222,224,1],[213,219,213,219,1],[213,228,213,222,0],[218,231,220,222,1],[213,231,216,226,0],
  [223,239,226,227,1],[221,228,221,224,1],[213,222,218,222,1],[216,223,216,220,0],[213,231,220,231,0],
  [224,244,231,241,0],[218,239,218,239,1],[211,224,218,220,0],[216,223,220,221,1],[213,237,224,225,1],
  [223,233,222,223,1],[228,244,231,234,0],[226,239,233,239,0],[233,241,237,238,1],[233,254,235,250,0],
  [239,267,250,261,0],[252,265,252,261,1],[254,272,254,272,0],[248,269,252,267,1],[234,252,244,252,1],
  [244,259,248,257,0],[248,259,254,257,1],[257,274,257,272,0],[263,274,265,272,1],[246,267,259,265,1],
  [254,272,254,265,0],[259,272,263,265,1],[257,265,259,263,1],[246,306,259,287,0],[241,330,289,304,0],
  [274,352,304,345,0],[317,386,319,343,1],[265,323,276,317,1],[244,287,260,276,1],[248,311,259,272,0],
  [272,349,274,345,0],[341,397,345,369,0],[315,412,326,369,1],[300,375,326,356,0],[347,384,354,358,0],
  [321,380,358,360,0],[306,362,339,362,1],[315,367,326,336,1],[326,367,326,354,0],[330,367,352,354,0],
  [254,356,265,356,1],[261,341,265,284,0],[269,304,286,287,0],[287,328,287,313,0],[282,328,291,313,1],
  [272,313,278,291,1],[265,296,274,280,1],[269,321,274,319,0],[319,380,321,380,0],[352,393,362,380,1],
  [330,371,356,362,1],[317,364,336,356,1],[339,378,339,360,0],[341,397,360,395,0],[367,403,395,397,1],
  [393,440,393,412,0],[371,416,384,410,1],[371,401,377,386,1],[358,382,358,375,1],[311,371,317,358,1],
  [315,352,319,352,0],[317,354,319,354,1],[312,341,317,328,0],[291,336,298,328,1],[265,311,298,306,0],
  [297,317,306,307,1],[304,341,304,334,0],[317,349,330,334,1],[313,343,334,341,0],[323,343,326,339,1],
  [317,334,326,327,1],[282,332,293,327,1],[272,302,291,293,0],[285,293,291,293,0],
];

const cci14 = [461,465,465,463,463,461,456,457,462,468,475,465,472,472,473,479,471,466,468,471,481,470,462,462,469,471,479,476,475,478,480,479,479,474,469,471,471,476,474,470,472,472,469,483,482,486,482,470,465,466,475,480,475,473,475,472,469,469,471,470,462,462,459,461,462,461,460,465,475,476,473,470,474,475,475,477,473,471,469,464,463,460,460,459,457,460,464,466,466,466,465,460,457,460];

const cci50 = [536,541,540,537,537,533,525,523,527,531,539,529,535,537,539,547,537,527,530,538,558,536,523,525,535,537,557,554,558,572,584,580,587,569,551,562,562,573,569,557,561,559,554,569,573,587,589,557,543,550,569,587,574,569,572,566,557,556,558,557,537,539,536,540,538,534,530,538,557,559,552,547,552,557,559,565,556,552,547,537,538,536,533,528,522,526,532,535,534,532,529,520,512,513];

// volume from 15:33 on, quiet bars before it get one tick
const volume = [606,626,626,627,632,628,635,627,623,632,637,639,636,640,641,642,628,630,642,639,641,642,646,645,634,640,641,644,644,643,642,639,644,646,647,642,645,647,647,646,624,643,643,647,647,649,648,634,641,651];

const emaSlow = "152,298 185,296 213,294 247,291 285,289 300,287 327,285 367,283 397,281 417,280 447,279 497,278 547,277 587,277 647,278 677,281 703,283 737,285 823,285 837,287 870,289 915,294 947,295 983,295 1003,296 1027,297 1085,297";
const emaFast = "152,222 213,222 225,220 292,220 300,221 317,220 335,220 347,222 405,222 427,223 437,225 453,228 465,229 475,233 497,233 517,237 533,239 547,242 575,244 587,247 595,250 607,257 615,260 647,260 655,265 667,272 677,274 688,280 705,288 717,292 727,294 735,296 745,300 757,298 803,297 825,296 837,302 853,307 870,311 885,317 905,326 923,332 932,334 963,334 983,332 997,329 1013,328 1033,329 1060,328 1070,326 1085,324";
const avgLow = "155,231 173,227 200,224 233,221 267,222 300,225 307,227 333,228 347,229 363,232 383,230 403,230 415,233 433,236 447,237 460,242 480,252 500,258 517,260 533,266 550,266 577,267 587,273 595,280 615,303 630,310 645,315 657,325 667,340 677,351 687,356 710,360 717,363 727,373 735,378 745,379 757,374 773,359 793,349 807,341 820,331 828,328 837,329 853,337 870,347 885,358 895,368 905,382 917,394 927,397 947,395 967,391 983,379 995,364 1007,351 1020,343 1037,339 1070,333 1085,328";
const avgHigh = "163,221 180,218 207,216 227,213 250,211 300,212 320,216 350,217 400,216 433,221 450,223 467,230 480,236 507,241 533,249 547,250 573,251 587,254 600,255 615,263 647,263 660,272 677,282 695,294 713,298 727,308 737,318 745,322 757,312 777,303 793,293 813,278 827,275 835,275 847,287 867,298 885,312 897,325 907,338 920,350 937,354 960,351 977,345 987,335 1003,318 1017,307 1030,303 1057,304 1067,300 1085,301";

let out = "";

function line(x1, y1, x2, y2, color, extra = "") {
  out += `<path d="M${x1} ${y1}L${x2} ${y2}" stroke="${color}" fill="none" ${extra}/>`;
}
function rect(x, y, w, h, color) {
  out += `<rect x="${x}" y="${y}" width="${w}" height="${h}" fill="${color}"/>`;
}
function poly(points, color, width = 1, extra = "") {
  out += `<polyline points="${points}" stroke="${color}" stroke-width="${width}" fill="none" ${extra}/>`;
}
function text(x, y, str, color, extra = "") {
  out += `<text x="${x}" y="${y}" fill="${color}" ${extra}>${str}</text>`;
}

const GRID = "#1c1c1c";
const panes = [[181, 442], [456, 488], [503, 591], [605, 651]];

out += '<g shape-rendering="crispEdges">';
rect(0, 167, 2, 506, "#f0f0f0");

// grid
const gridY = [192,213,235,257,278,300,321,343,364,386,408,429,463,521,530,540,568,578,606,616,626,636,646];
gridY.forEach((y) => line(2, y + 0.5, 1147, y + 0.5, GRID));
for (let x = 185; x <= 1085; x += 100) {
  panes.forEach(([a, b]) => line(x + 0.5, a, x + 0.5, b, GRID));
}

// session start and last day marker
panes.forEach(([a, b]) => {
  line(585.5, a, 585.5, b, "#fff");
  line(875.5, a, 875.5, b, "#cde", 'stroke-dasharray="1 1"');
});

// indicator levels
line(585, 181.5, 1085, 181.5, "#ff0");
[460, 474, 511, 549].forEach((y) => line(2, y + 0.5, 1085, y + 0.5, "#008000"));
line(2, 502.5, 1085, 502.5, "#f00");
line(2, 559.5, 1085, 559.5, "#f00");

// price bars
bars.forEach(([high, low, top, bottom, up], i) => {
  const x = START + i * STEP;
  line(x + 0.5, high, x + 0.5, low, "#808080");
  rect(x - 2, top, 5, Math.max(bottom - top, 1), up ? "#0f0" : "#f00");
});
line(585.5, 259, 585.5, 287, "#0ff");

poly("587,293.5 667,293.5 675,296.5 895,296.5 905,311.5 1085,311.5", "#0ff");
poly("587,405.5 667,405.5 675,412.5 895,412.5 905,440.5 1085,440.5", "#f00");
poly(avgHigh, "#0f0", 1, 'stroke-dasharray="4 3"');
poly(avgLow, "#fff", 1, 'stroke-dasharray="4 3"');
poly(emaSlow, "#00f", 2);
poly(emaFast, "#f0f", 2);

// oscillators hang from their zero line
function oscillator(values, zero, color) {
  values.forEach((y, i) => {
    const x = START + i * STEP + 0.5;
    line(x, zero, x, y, color);
  });
  poly(values.map((y, i) => `${START + i * STEP + 0.5},${y + 0.5}`).join(" "), color);
}
oscillator(cci14, 467, "#f00");
oscillator(cci50, 530, "#00f");
line(585.5, 467, 585.5, 482, "#0ff");
line(585.5, 530, 585.5, 569, "#ff0");
line(585.5, 643, 585.5, 652, "#0ff");

// volume
for (let i = 0; i < 43; i++) {
  line(START + i * STEP + 0.5, i < 12 ? 651 : 650, START + i * STEP + 0.5, 652, "#f00");
}
volume.forEach((y, i) => line(595.5 + i * STEP, y, 595.5 + i * STEP, 652, "#f00"));

// axes
line(2, 653.5, 1198, 653.5, "#f00");
line(1148.5, 167, 1148.5, 660, "#f00");
line(1147, 488.5, 1198, 488.5, "#f00");
line(1147, 591.5, 1198, 591.5, "#f00");
gridY.concat([502, 511, 549, 559]).forEach((y) => line(1148, y + 0.5, 1152, y + 0.5, "#f00"));
for (let x = 185; x <= 1085; x += 100) line(x + 0.5, 653, x + 0.5, 656, "#f00");
out += "</g>";

for (let x = 185, m = 810; x <= 1085; x += 100, m += 30) {
  const label = Math.floor(m / 60) + ":" + String(m % 60).padStart(2, "0");
  text(x, 669, label, "#fff", 'text-anchor="middle"');
}

// price axis
[["1,128.00",196],["1,127.00",217],["1,126.00",239],["1,125.00",261],["1,124.00",282],["1,121.00",347],["1,120.00",368],["1,119.00",390],["1,118.00",412],
 ["-100.00",478],["100.00",515],["-50.00",544],["-200.00",572],["4,500.00",610],["1,500.00",640]]
  .forEach(([s, y]) => text(1153, y, s, "#fff"));

[[176,190,"#ff0","1,128.50"],[332,337,"#fff",""],[302,306,"#00f",""],[306,310,"#0f0",""],[310,318,"#0ff","1,122.50"],[288,302,"#f00","1,123.30"],
 [318,332,"#f0f","1,121.92"],[435,449,"#f00","1,116.50"],[454,467,"#f00","112.06"],[508,522,"#00f","93.66"],[646,660,"#f00","56.00"]]
  .forEach(([a, b, color, s]) => {
    rect(1149, a, 49, b - a, color);
    if (s) text(1154, Math.min(b - 1, a + 11), s, "#111");
  });

// legends
[[141,"5.30","#0f0"],[168,"5.60","#0f0"],[199,"0.50%","#0f0"],[240,"B=1123.20","#fff"],[298,"A=1123.30","#fff"],[357,"O=1118.30","#0f0"],
 [416,"Hi=1128.50","#fff"],[476,"Lo=1116.50","#fff"],[539,"V=80,426","#fff"],[592,"Mov Avg Exponential (Close,204,0)","#fff"],[770,"1123.11","#00c"],
 [815,"Mov Avg Exponential (Close,34,0)","#fff"],[987,"1121.92","#f0f"],[1032,"Mov Avg 1 Line (low, ...","#fff"]]
  .forEach(([x, s, c]) => text(x, 179, s, c));

[[151,"100,Red,Red)","#fff"],[226,"112.06","#f00"],[264,"100.00","#008000"],[303,"-100.00","#008000"],[345,"Comm Channel Index (14,-100,100,red,Red)","#fff"],
 [566,"112.06","#f00"],[604,"100.00","#008000"],[643,"-100.00","#008000"]]
  .forEach(([x, s, c]) => text(x, 454, s, c));

[[151,"100,blue,blue)","#fff"],[227,"93.66","#00f"],[260,"100.00","#008000"],[299,"-100.00","#008000"],[341,"Comm Channel Index (50,-100,100,blue,blue)","#fff"],
 [567,"93.66","#00f"],[599,"100.00","#008000"],[638,"-100.00","#008000"],[680,"Comm Channel Index (50,-150,150,blue,blue)","#fff"],
 [906,"93.66","#00f"],[938,"150.00","#f00"],[977,"-150.00","#f00"]]
  .forEach(([x, s, c]) => text(x, 500, s, c));

text(0, 0, "04/16/14", "#9fc4e8", 'transform="translate(866 183) rotate(90)"');

document.getElementById("chart").innerHTML = out;
```
